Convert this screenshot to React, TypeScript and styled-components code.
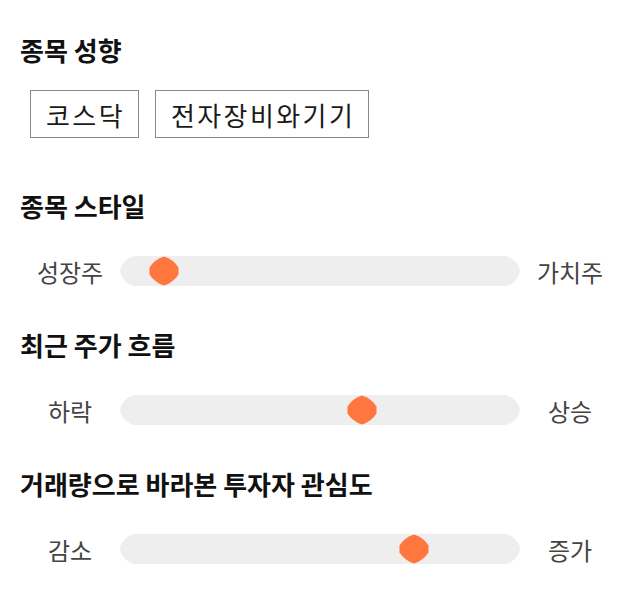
import React from "react";
import styled, { createGlobalStyle } from "styled-components";

const GlobalStyle = createGlobalStyle`
  body {
    margin: 0;
    background: #ffffff;
    font-family: "Noto Sans CJK KR", "Noto Sans", sans-serif;
  }
`;

const Page = styled.div`
  padding: 34px 20px 20px;
  width: 600px;
`;

const Title = styled.h2`
  margin: 0;
  font-size: 26px;
  line-height: 32px;
  font-weight: 700;
  color: #111111;
`;

const Section = styled.section<{ $gap: number }>`
  margin-top: ${(p) => p.$gap}px;
`;

const Tags = styled.div`
  display: flex;
  gap: 16px;
  margin: 24px 0 0 10px;
`;

const Tag = styled.div`
  height: 48px;
  box-sizing: border-box;
  border: 1px solid #888888;
  padding: 0 13px 0 15px;
  display: flex;
  align-items: center;
  font-size: 26px;
  letter-spacing: 2.4px;
  color: #1a1a1a;
`;

const SliderRow = styled.div`
  display: grid;
  grid-template-columns: 100px 400px 100px;
  align-items: center;
  height: 40px;
  margin-top: 29px;
`;

const SideLabel = styled.span`
  text-align: center;
  font-size: 24px;
  color: #444444;
`;

const Track = styled.div`
  position: relative;
  height: 30px;
  background: #eeeeee;
  clip-path: path("M15 0 H385 A18 18 0 0 1 400 15 A18 18 0 0 1 385 30 H15 A18 18 0 0 1 0 15 A18 18 0 0 1 15 0 Z");
`;

const Thumb = styled.svg`
  position: absolute;
  top: 0;
  width: 30px;
  height: 30px;
  margin-left: -15px;
`;

function Slider({ left, right, value }: { left: string; right: string; value: number }) {
  return (
    <SliderRow>
      <SideLabel>{left}</SideLabel>
      <Track>
        <Thumb viewBox="0 0 30 30" style={{ left: `${value}%` }}>
          <path
            d="M15 0.5 A26 26 0 0 1 29.5 11.5 L29.5 18.5 A26 26 0 0 1 15 29.5 A26 26 0 0 1 0.5 18.5 L0.5 11.5 A26 26 0 0 1 15 0.5 Z"
            fill="#ff773f"
          />
        </Thumb>
      </Track>
      <SideLabel>{right}</SideLabel>
    </SliderRow>
  );
}

export default function App() {
  return (
    <Page>
      <GlobalStyle />
      <Title>종목 성향</Title>
      <Tags>
        <Tag>코스닥</Tag>
        <Tag>전자장비와기기</Tag>
      </Tags>
      <Section $gap={52}>
        <Title>종목 스타일</Title>
        <Slider left="성장주" right="가치주" value={11.1} />
      </Section>
      <Section $gap={38}>
        <Title>최근 주가 흐름</Title>
        <Slider left="하락" right="상승" value={60.5} />
      </Section>
      <Section $gap={38}>
        <Title>거래량으로 바라본 투자자 관심도</Title>
        <Slider left="감소" right="증가" value={73.5} />
      </Section>
    </Page>
  );
}
